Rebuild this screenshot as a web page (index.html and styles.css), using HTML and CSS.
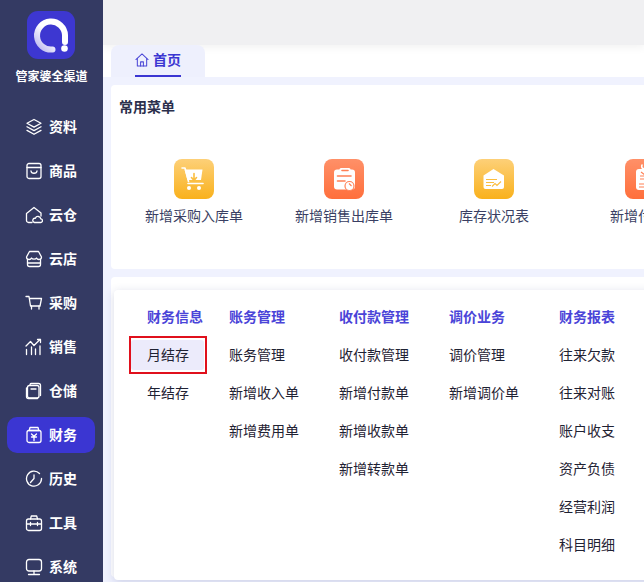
FILE: index.html
```html
<!DOCTYPE html>
<html lang="zh-CN">
<head>
    <meta charset="UTF-8">
    <meta name="viewport" content="width=device-width, initial-scale=1.0">
    <title>管家婆全渠道</title>
    <link rel="stylesheet" href="styles.css">
</head>
<body>

    <!-- Sidebar -->
    <aside class="sidebar">
        <div class="brand">
            <svg class="brand-logo" viewBox="0 0 48 48">
                <defs>
                    <linearGradient id="ring" x1="0" y1="1" x2="1" y2="0">
                        <stop offset="0" stop-color="#b9b6f0"/>
                        <stop offset="0.5" stop-color="#ffffff"/>
                    </linearGradient>
                </defs>
                <rect width="48" height="48" rx="11" fill="#3d37d1"/>
                <path d="M25.5 38.5A14 14 0 1 1 38 24v7" fill="none" stroke="url(#ring)" stroke-width="6" stroke-linecap="round"/>
                <circle cx="37.5" cy="37.5" r="3.3" fill="#fff"/>
            </svg>
            <div class="brand-name">管家婆全渠道</div>
        </div>
        <nav class="nav">
            <a class="nav-item">
                <svg class="nav-icon" viewBox="0 0 18 18"><path d="M9 1.500l7 3.800-7 3.800-7-3.800z"/><path d="M2 8.800l7 3.800 7-3.800"/><path d="M2 12.400l7 3.900 7-3.900"/></svg>
                <span>资料</span>
            </a>
            <a class="nav-item">
                <svg class="nav-icon" viewBox="0 0 18 18"><rect x="2" y="1.500" width="14" height="15" rx="2"/><path d="M2 5.500h14"/><path d="M6 9c.3 3 5.700 3 6 0"/></svg>
                <span>商品</span>
            </a>
            <a class="nav-item">
                <svg class="nav-icon" viewBox="0 0 18 18"><path d="M7 16.500H3.500A2 2 0 0 1 1.500 14.500V7.500L9 1.500l7 5.500v3"/><path d="M9.500 16.500h6a1.800 1.800 0 0 0 .3-3.600 2.800 2.800 0 0 0-5.400-.6 2.100 2.100 0 0 0-.9 4.200z"/></svg>
                <span>云仓</span>
            </a>
            <a class="nav-item">
                <svg class="nav-icon" viewBox="0 0 18 18"><path d="M4.500 1.500h9l3 5.500c0 3-4 3.200-5 1-.7 1.600-4.300 1.600-5 0-1 2.200-5 2-5-1z"/><path d="M2.500 9.500v5a2 2 0 0 0 2 2h9a2 2 0 0 0 2-2v-5"/><path d="M2.500 13h13"/></svg>
                <span>云店</span>
            </a>
            <a class="nav-item">
                <svg class="nav-icon" viewBox="0 0 18 18"><path d="M1 2.500h3l1.500 9.500h9.500l1.500-7.500H4.500"/><path d="M6.500 12v3M14 12v3"/></svg>
                <span>采购</span>
            </a>
            <a class="nav-item">
                <svg class="nav-icon" viewBox="0 0 18 18"><path d="M1 8l4.500-4.500 3.500 4 6-6"/><path d="M12.500 1.500h3v3"/><path d="M1.500 11.500v5M6.500 9v7.500M10.500 11v5.500M15 8v8.500"/></svg>
                <span>销售</span>
            </a>
            <a class="nav-item">
                <svg class="nav-icon" viewBox="0 0 18 18"><path d="M5 2.500a1.500 1.500 0 0 1 1.500-1h7a2 2 0 0 1 2 2v10"/><rect x="2.500" y="3.500" width="11.500" height="12.500" rx="2"/><path d="M6 7h5"/><path d="M1.500 6v8.500a2 2 0 0 0 2 2h9"/></svg>
                <span>仓储</span>
            </a>
            <a class="nav-item active">
                <svg class="nav-icon" viewBox="0 0 18 18"><path d="M5 1.500h8l.8 3H4.200z"/><rect x="2" y="4.500" width="14" height="12" rx="2"/><path d="M6.500 8L9 10.200 11.500 8M6.500 11h5M9 10.200V14.500"/></svg>
                <span>财务</span>
            </a>
            <a class="nav-item">
                <svg class="nav-icon" viewBox="0 0 18 18"><path d="M14.500 3.500A7.500 7.500 0 1 0 16.500 9"/><path d="M5.500 12.500L9 8.500V5"/><path d="M16.500 9v-.5"/></svg>
                <span>历史</span>
            </a>
            <a class="nav-item">
                <svg class="nav-icon" viewBox="0 0 18 18"><path d="M5.500 5l.8-3h5.400l.8 3"/><rect x="1.500" y="5" width="15" height="11.500" rx="2"/><path d="M1.500 10h15M5.500 8.500v3M12.500 8.500v3"/></svg>
                <span>工具</span>
            </a>
            <a class="nav-item">
                <svg class="nav-icon" viewBox="0 0 18 18"><rect x="1.500" y="1.500" width="15" height="11.500" rx="2.500"/><path d="M9 13v3.500M3.500 16.500h11"/></svg>
                <span>系统</span>
            </a>
        </nav>
    </aside>

    <!-- Main Content -->
    <main class="main">
        <div class="topbar"></div>

        <div class="tabbar">
            <div class="tab">
                <span class="tab-inner">
                    <svg class="tab-icon" viewBox="0 0 15 15"><path d="M1 7L7.500 1 14 7"/><path d="M2.500 5.800V14h10V5.800"/><path d="M6 14V9.500h3V14"/></svg>
                    <span class="tab-text">首页</span>
                </span>
            </div>
        </div>

        <div class="content">
            <section class="card card-menu">
                <h3 class="card-title">常用菜单</h3>
                <div class="shortcuts">
                    <div class="shortcut">
                        <div class="shortcut-icon yellow">
                            <svg viewBox="0 0 40 40"><path d="M8 9h3l3.500 13.500" class="line"/><path d="M10.500 10.500H28.500L27 21H13.500z" class="fill"/><path d="M14 24.500h15" class="line"/><circle cx="15" cy="29" r="2" class="fill"/><circle cx="25" cy="29" r="2" class="fill"/><path d="M20 14.500v6.500M17.500 18.500l2.500 3 2.500-3" class="cut"/></svg>
                        </div>
                        <div class="shortcut-label">新增采购入库单</div>
                    </div>
                    <div class="shortcut">
                        <div class="shortcut-icon orange">
                            <svg viewBox="0 0 40 40"><rect x="10" y="10.500" width="21" height="20" rx="3" class="fill"/><rect x="15.500" y="9" width="11" height="5" rx="1.500" class="fill"/><path d="M18 11.500h6" class="cut"/><path d="M13.500 17h13.500M13.500 22h7.500" class="cut"/><circle cx="25.500" cy="27" r="4.500" class="cut-fill"/><path d="M25 24.500l2.500 2.500" class="cut-thin"/></svg>
                        </div>
                        <div class="shortcut-label">新增销售出库单</div>
                    </div>
                    <div class="shortcut">
                        <div class="shortcut-icon yellow">
                            <svg viewBox="0 0 40 40"><path d="M9.500 16.500L19.500 10l10.500 6.500V28a2 2 0 0 1-2 2H11.500a2 2 0 0 1-2-2z" class="fill"/><path d="M12 20.500h11M12 23.500h8M12 26.500h5M18 27.500l3-3 2 2 4-4" class="cut-thin"/></svg>
                        </div>
                        <div class="shortcut-label">库存状况表</div>
                    </div>
                    <div class="shortcut shortcut-last">
                        <div class="shortcut-icon orange">
                            <svg viewBox="0 0 40 40"><rect x="11" y="10" width="19" height="21" rx="3" class="fill"/><path d="M17 6c-1 3 1 4 3 4s4-1 3-4" class="line"/><path d="M16 13l4 3 4-3M15 17h10M15 20h10M20 16v6M14 25h13M14 28h13" class="cut-thin"/></svg>
                        </div>
                        <div class="shortcut-label">新增付款单</div>
                    </div>
                </div>
            </section>

            <section class="card card-docs">
                <h3 class="card-title">常用单据</h3>
            </section>
        </div>

        <!-- Finance menu popup -->
        <div class="menu">
            <div class="menu-col first">
                <div class="menu-head">财务信息</div>
                <a class="menu-item current"><span>月结存</span></a>
                <a class="menu-item">年结存</a>
            </div>
            <div class="menu-col">
                <div class="menu-head">账务管理</div>
                <a class="menu-item">账务管理</a>
                <a class="menu-item">新增收入单</a>
                <a class="menu-item">新增费用单</a>
            </div>
            <div class="menu-col">
                <div class="menu-head">收付款管理</div>
                <a class="menu-item">收付款管理</a>
                <a class="menu-item">新增付款单</a>
                <a class="menu-item">新增收款单</a>
                <a class="menu-item">新增转款单</a>
            </div>
            <div class="menu-col">
                <div class="menu-head">调价业务</div>
                <a class="menu-item">调价管理</a>
                <a class="menu-item">新增调价单</a>
            </div>
            <div class="menu-col">
                <div class="menu-head">财务报表</div>
                <a class="menu-item">往来欠款</a>
                <a class="menu-item">往来对账</a>
                <a class="menu-item">账户收支</a>
                <a class="menu-item">资产负债</a>
                <a class="menu-item">经营利润</a>
                <a class="menu-item">科目明细</a>
            </div>
        </div>
    </main>

</body>
</html>
```

FILE: styles.css
```css
/* Global Styles */
html, body {
    height: 100%;
    overflow: hidden;
}

body {
    margin: 0;
    display: flex;
    font-family: "Noto Sans CJK SC", "Liberation Sans", sans-serif;
    font-size: 14px;
    background-color: #f0f2fe;
}

/* Sidebar */
.sidebar {
    width: 103px;
    flex-shrink: 0;
    background-color: #343a63;
    color: #fff;
    overflow: hidden;
}

.brand {
    padding-top: 11px;
    display: flex;
    flex-direction: column;
    align-items: center;
}

.brand-logo {
    width: 48px;
    height: 48px;
    margin-right: 1px;
}

.brand-name {
    margin-top: 8px;
    font-size: 12px;
    line-height: 18px;
    font-weight: bold;
}

.nav {
    margin-top: 24px;
    padding: 0 8px 0 7px;
    display: flex;
    flex-direction: column;
    gap: 8px;
}

.nav-item {
    height: 36px;
    flex-shrink: 0;
    padding-left: 18px;
    display: flex;
    align-items: center;
    gap: 6px;
    border-radius: 10px;
    font-weight: bold;
}

.nav-item span {
    margin-bottom: 2px;
}

.nav-item.active {
    background-color: #3b36d2;
}

.nav-icon {
    width: 18px;
    height: 18px;
    fill: none;
    stroke: #fff;
    stroke-width: 1.3;
    stroke-linecap: round;
    stroke-linejoin: round;
}

/* Main */
.main {
    flex: 1;
    min-width: 0;
    position: relative;
    overflow: hidden;
}

.topbar {
    height: 45px;
    background-color: #f0f0f2;
    box-shadow: 0 3px 8px rgba(0, 0, 0, 0.05);
    position: relative;
}

.tabbar {
    height: 32px;
    padding-left: 8px;
    background-color: #fff;
}

.tab {
    width: 94px;
    height: 32px;
    display: flex;
    justify-content: center;
    background-color: #eef0fd;
    border-radius: 8px 8px 0 0;
    position: relative;
}

.tab-inner {
    height: 30px;
    display: flex;
    align-items: center;
    gap: 4px;
    border-bottom: 2px solid #3b36d2;
    color: #3b36d2;
    font-weight: bold;
}

.tab-text {
    margin-bottom: 2px;
}

.tab-icon {
    width: 14px;
    height: 14px;
    fill: none;
    stroke: #4b47d6;
    stroke-width: 1.1;
    stroke-linecap: round;
    stroke-linejoin: round;
}

/* Cards */
.content {
    padding: 8px 0 0 8px;
    display: flex;
    flex-direction: column;
    gap: 8px;
}

.card {
    background-color: #fff;
    border-radius: 4px 0 0 4px;
    padding: 11px 9px 0 8px;
}

.card-menu {
    height: 184px;
    box-sizing: border-box;
}

.card-docs {
    height: 300px;
    box-sizing: border-box;
    padding-top: 9px;
}

.card-title {
    margin: 0;
    font-size: 14px;
    line-height: 20px;
    color: #2b2f4c;
}

/* Shortcuts */
.shortcuts {
    margin-top: 43px;
    display: flex;
}

.shortcut {
    width: 150px;
    flex-shrink: 0;
    display: flex;
    flex-direction: column;
    align-items: center;
}

.shortcut-last {
    margin-left: 1px;
}

.shortcut-icon {
    width: 40px;
    height: 40px;
    border-radius: 8px;
}

.shortcut-icon svg {
    display: block;
    width: 40px;
    height: 40px;
}

.shortcut-icon.yellow {
    --tint: #fbbe40;
    background: linear-gradient(#fdd078, #f9b11c);
}

.shortcut-icon.orange {
    --tint: #ff8055;
    background: linear-gradient(#ff9068, #ff6f3c);
}

.shortcut-icon .fill {
    fill: #fff;
}

.shortcut-icon .line {
    fill: none;
    stroke: #fff;
    stroke-width: 1.6;
    stroke-linecap: round;
    stroke-linejoin: round;
}

.shortcut-icon .cut {
    fill: none;
    stroke: var(--tint);
    stroke-width: 1.6;
    stroke-linecap: round;
    stroke-linejoin: round;
}

.shortcut-icon .cut-thin {
    fill: none;
    stroke: var(--tint);
    stroke-width: 1.1;
}

.shortcut-icon .cut-fill {
    fill: #fff;
    stroke: var(--tint);
    stroke-width: 1.2;
}

.shortcut-label {
    margin-top: 6px;
    line-height: 20px;
    color: #3a3f63;
    white-space: nowrap;
}

/* Finance popup menu */
.menu {
    position: absolute;
    left: 11px;
    top: 290px;
    width: 560px;
    height: 290px;
    box-sizing: border-box;
    padding: 8px 0 0 15px;
    display: flex;
    background-color: #fff;
    border-radius: 4px;
    box-shadow: 0 2px 10px rgba(40, 50, 120, 0.18);
}

.menu-col {
    width: 110px;
    flex-shrink: 0;
}

.menu-col.first {
    width: 82px;
}

.menu-head,
.menu-item {
    display: block;
    height: 38px;
    line-height: 36px;
    padding-left: 18px;
    box-sizing: border-box;
    color: #1f2233;
    white-space: nowrap;
}

.menu-head {
    color: #4a44d8;
    font-weight: bold;
}

.menu-item.current {
    width: 78px;
    padding: 2px 1px 2px 0;
    border: 2px solid #e0101c;
    line-height: 28px;
}

.menu-item.current span {
    display: block;
    height: 30px;
    padding-left: 16px;
    background-color: #ecebfb;
    border-radius: 3px;
}
```
